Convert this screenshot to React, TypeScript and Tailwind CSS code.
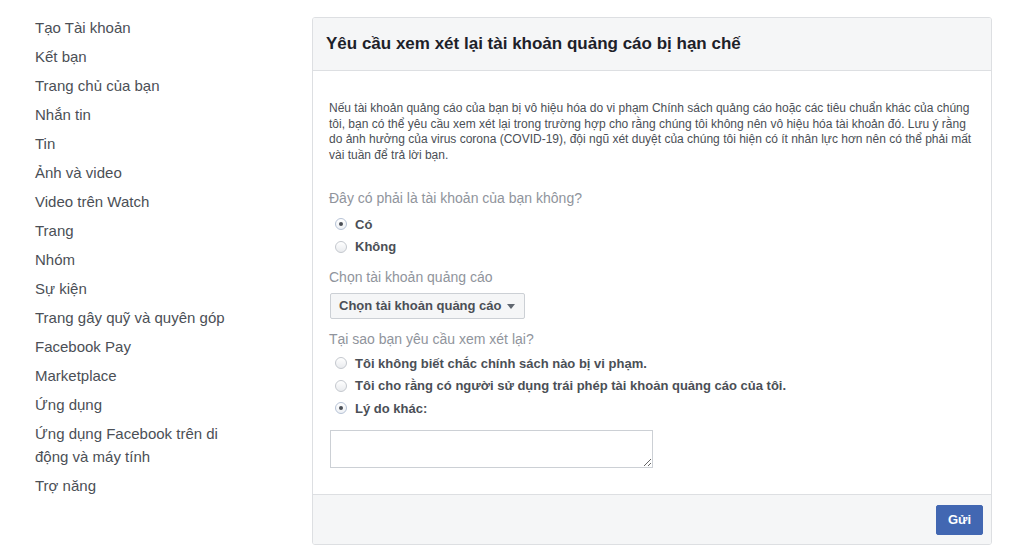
import React from 'react';

const navItems = [
  'Tạo Tài khoản',
  'Kết bạn',
  'Trang chủ của bạn',
  'Nhắn tin',
  'Tin',
  'Ảnh và video',
  'Video trên Watch',
  'Trang',
  'Nhóm',
  'Sự kiện',
  'Trang gây quỹ và quyên góp',
  'Facebook Pay',
  'Marketplace',
  'Ứng dụng',
  'Ứng dụng Facebook trên di động và máy tính',
  'Trợ năng',
];

function Radio({ checked, label }: { checked?: boolean; label: string }) {
  return (
    <label className="flex items-center h-[22.5px] pl-[6px] gap-[8px] cursor-pointer">
      {checked ? (
        <span className="w-[12px] h-[12px] rounded-full border border-[#b7c3d6] bg-gradient-to-b from-white to-[#eef1f5] flex items-center justify-center">
          <span className="w-[4px] h-[4px] rounded-full bg-[#4b4f56]"></span>
        </span>
      ) : (
        <span className="w-[12px] h-[12px] rounded-full border border-[#c4c8ce] bg-gradient-to-b from-white to-[#e9ebee]"></span>
      )}
      <span className="text-[13px] font-bold text-[#4b4f56]">{label}</span>
    </label>
  );
}

export default function App() {
  return (
    <div className="bg-white w-[1024px] h-[559px] flex font-['Liberation_Sans',Arial,sans-serif]">
      {/* Help center navigation */}
      <aside className="w-[312px] shrink-0 pl-[35px] pr-[77px] pt-[13px]">
        <ul>
          {navItems.map((item) => (
            <li key={item} className="py-[3px] text-[15px] leading-[23px] text-[#4b4f56]">
              {item}
            </li>
          ))}
        </ul>
      </aside>

      {/* Review request card */}
      <div className="mt-[17px] w-[680px] h-[528px] border border-[#dddfe2] rounded-[3px] flex flex-col overflow-hidden">
        <div className="h-[53px] bg-[#f5f6f7] border-b border-[#dddfe2] px-[13px] flex items-center">
          <h2 className="text-[17px] font-bold text-[#1d2129]">
            Yêu cầu xem xét lại tài khoản quảng cáo bị hạn chế
          </h2>
        </div>

        <div className="flex-1 pl-[16px] pr-[12px] pt-[30px]">
          <p className="text-[12px] leading-[15.5px] text-[#4b4f56]">
            Nếu tài khoản quảng cáo của bạn bị vô hiệu hóa do vi phạm Chính sách quảng cáo hoặc các tiêu chuẩn khác của chúng
            tôi, bạn có thể yêu cầu xem xét lại trong trường hợp cho rằng chúng tôi không nên vô hiệu hóa tài khoản đó. Lưu ý rằng
            do ảnh hưởng của virus corona (COVID-19), đội ngũ xét duyệt của chúng tôi hiện có ít nhân lực hơn nên có thể phải mất
            vài tuần để trả lời bạn.
          </p>

          <div className="mt-[27px] text-[14px] leading-[16px] text-[#90949c]">Đây có phải là tài khoản của bạn không?</div>
          <div className="mt-[7px]">
            <Radio checked label="Có" />
            <Radio label="Không" />
          </div>

          <div className="mt-[11px] text-[14px] leading-[16px] text-[#90949c]">Chọn tài khoản quảng cáo</div>
          <button className="mt-[8px] ml-[1px] h-[26px] w-[195px] px-[8px] border border-[#ccd0d5] bg-[#f5f6f7] rounded-[2px] flex items-center gap-[5px] whitespace-nowrap text-[13px] font-bold text-[#4b4f56]">
            Chọn tài khoản quảng cáo
            <svg width="8" height="5" viewBox="0 0 8 5" className="shrink-0">
              <path d="M0 0h8L4 5z" fill="#606770" />
            </svg>
          </button>

          <div className="mt-[12px] text-[14px] leading-[16px] text-[#90949c]">Tại sao bạn yêu cầu xem xét lại?</div>
          <div className="mt-[5px]">
            <Radio label="Tôi không biết chắc chính sách nào bị vi phạm." />
            <Radio label="Tôi cho rằng có người sử dụng trái phép tài khoản quảng cáo của tôi." />
            <Radio checked label="Lý do khác:" />
          </div>

          <textarea className="mt-[10px] ml-[1px] block w-[323px] h-[38px] border border-[#ccd0d5] bg-white outline-none text-[12px]" />
        </div>

        <div className="h-[50px] bg-[#f5f6f7] border-t border-[#dddfe2] flex items-center justify-end pr-[8px]">
          <button className="w-[47px] h-[30px] bg-[#4267b2] rounded-[2px] border border-[#4267b2] text-white text-[13px] font-bold">
            Gửi
          </button>
        </div>
      </div>
    </div>
  );
}
